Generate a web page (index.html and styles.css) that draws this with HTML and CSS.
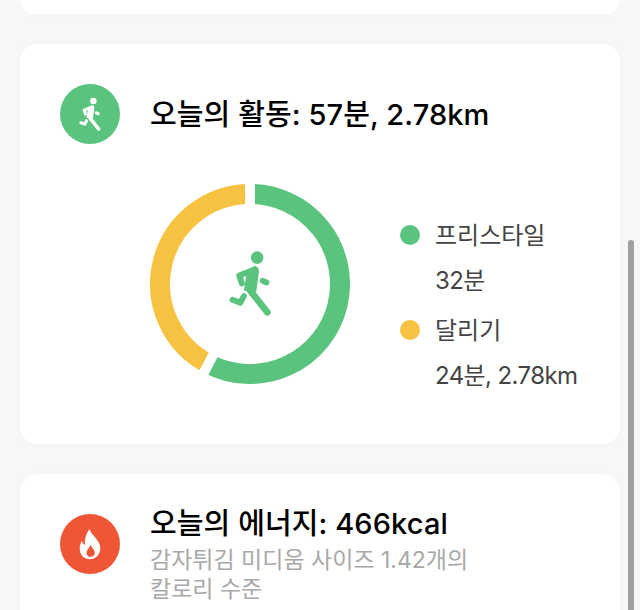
FILE: index.html
```html
<!DOCTYPE html>
<html lang="ko">
<head>
<meta charset="UTF-8">
<meta name="viewport" content="width=device-width, initial-scale=1.0">
<title>오늘의 기록</title>
<link rel="stylesheet" href="styles.css">
</head>
<body>
<svg class="defs" width="0" height="0">
  <symbol id="runner" viewBox="260 225 140 205">
    <circle cx="350" cy="248" r="19" fill="currentColor"/>
    <path d="M340 273 C352 272 357 282 355 294 L347 352 L310 348 L318 295 Z" fill="currentColor"/>
    <path d="M338 285 L296 302 L304 326" stroke="currentColor" stroke-width="18" stroke-linecap="round" stroke-linejoin="round" fill="none"/>
    <path d="M328 346 L381 413" stroke="currentColor" stroke-width="20" stroke-linecap="round" fill="none"/>
    <path d="M367 318 L378 323" stroke="currentColor" stroke-width="18" stroke-linecap="round" fill="none"/>
    <path d="M310 364 L299 384 L276 375" stroke="currentColor" stroke-width="18" stroke-linecap="round" stroke-linejoin="round" fill="none"/>
  </symbol>
</svg>

<div class="page">
  <div class="card card-stub"></div>

  <section class="card card-activity">
    <div class="card-head">
      <div class="badge badge-green">
        <svg class="badge-runner"><use href="#runner"/></svg>
      </div>
      <h2 class="title-activity">오늘의 활동: 57분, 2.78km</h2>
    </div>
    <div class="activity-body">
      <div class="donut">
        <svg width="200" height="200" viewBox="0 0 200 200">
          <path d="M100 10 A90 90 0 1 1 58.45 179.83" fill="none" stroke="#5ac47f" stroke-width="20"/>
          <path d="M58.45 179.83 A90 90 0 0 1 100 10" fill="none" stroke="#f5c242" stroke-width="20"/>
          <path d="M100 -2 L100 26" stroke="#fff" stroke-width="10"/>
          <path d="M65.4 166.5 L51.5 193.1" stroke="#fff" stroke-width="10"/>
        </svg>
        <svg class="donut-runner"><use href="#runner"/></svg>
      </div>
      <ul class="legend">
        <li class="legend-name"><span class="dot dot-green"></span>프리스타일</li>
        <li class="legend-value">32분</li>
        <li class="legend-name"><span class="dot dot-yellow"></span>달리기</li>
        <li class="legend-value">24분, 2.78km</li>
      </ul>
    </div>
  </section>

  <section class="card card-energy">
    <div class="card-head card-head-top">
      <div class="badge badge-red">
        <svg width="26" height="34" viewBox="110 85 76 100">
          <path fill-rule="evenodd" fill="#fff" d="M147 91 C150 104 160 110 168 122 C176 133 180 143 178 153 C175 170 163 180 148 180 C132 180 119 169 118 152 C117 141 120 133 124 126 C126 132 129 136 133 138 C132 122 136 104 147 91 Z M150 137 C147 146 138 151 138 161 C138 168 143 173 150 173 C157 173 162 168 162 161 C162 152 154 147 150 137 Z"/>
        </svg>
      </div>
      <div class="energy-text">
        <h2>오늘의 에너지: 466kcal</h2>
        <p>감자튀김 미디움 사이즈 1.42개의<br>칼로리 수준</p>
      </div>
    </div>
  </section>
</div>

<div class="scrollbar"></div>
</body>
</html>
```

FILE: styles.css
```css
html, body {
    height: 100%;
    margin: 0;
    overflow: hidden;
}
body {
    background-color: #f7f7f7;
    font-family: Inter, "Noto Sans CJK KR", sans-serif;
    color: #000;
}
.defs {
    display: block;
}
.page {
    display: flex;
    flex-direction: column;
    gap: 30px;
    padding: 0 20px;
    height: 610px;
    overflow: hidden;
}
.card {
    flex: none;
    background-color: #fff;
    border-radius: 18px;
    box-shadow: 0 0 12px rgba(0, 0, 0, 0.015);
}
.card-stub {
    height: 14px;
    border-radius: 0 0 18px 18px;
}
.card-activity {
    height: 400px;
    padding: 40px;
    box-sizing: border-box;
}
.card-energy {
    height: 200px;
    padding: 40px;
    box-sizing: border-box;
}
.card-head {
    display: flex;
    align-items: center;
    gap: 30px;
}
.card-head-top {
    align-items: flex-start;
}
.badge {
    flex: none;
    width: 60px;
    height: 60px;
    border-radius: 50%;
    display: flex;
    align-items: center;
    justify-content: center;
}
.badge-green {
    background-color: #5ac47f;
}
.badge-red {
    background-color: #ee5636;
}
.badge-runner {
    width: 24px;
    height: 35px;
    color: #fff;
}
h2 {
    margin: 0;
    font-size: 29px;
    line-height: 38px;
    font-weight: 500;
    letter-spacing: 0.1px;
}
.title-activity {
    padding-top: 2px;
}
.energy-text {
    margin-top: -9px;
}
.energy-text p {
    margin: 3px 0 0;
    font-size: 23px;
    line-height: 29px;
    color: #a8a8a8;
}
.activity-body {
    display: flex;
    align-items: flex-start;
    margin-top: 40px;
    padding-left: 90px;
}
.donut {
    position: relative;
    width: 200px;
    height: 200px;
    flex: none;
}
.donut svg {
    display: block;
}
.donut-runner {
    position: absolute;
    left: 77px;
    top: 66px;
    width: 47px;
    height: 68px;
    color: #5ac47f;
}
.legend {
    list-style: none;
    margin: 27px 0 0 50px;
    padding: 0;
    white-space: nowrap;
    color: #444;
    font-size: 24px;
}
.legend li {
    display: flex;
    align-items: center;
}
.legend .legend-name {
    height: 44px;
}
.legend .legend-value {
    height: 46px;
    padding-left: 35px;
    margin-bottom: 5px;
    letter-spacing: -0.6px;
}
.dot {
    width: 20px;
    height: 20px;
    border-radius: 50%;
    margin: 4px 15px 0 0;
}
.dot-green {
    background-color: #5ac47f;
}
.dot-yellow {
    background-color: #f5c242;
}
.scrollbar {
    position: absolute;
    left: 628px;
    top: 240px;
    width: 6px;
    height: 370px;
    background-color: #a0a0a0;
    border-radius: 3px 3px 0 0;
}
```
